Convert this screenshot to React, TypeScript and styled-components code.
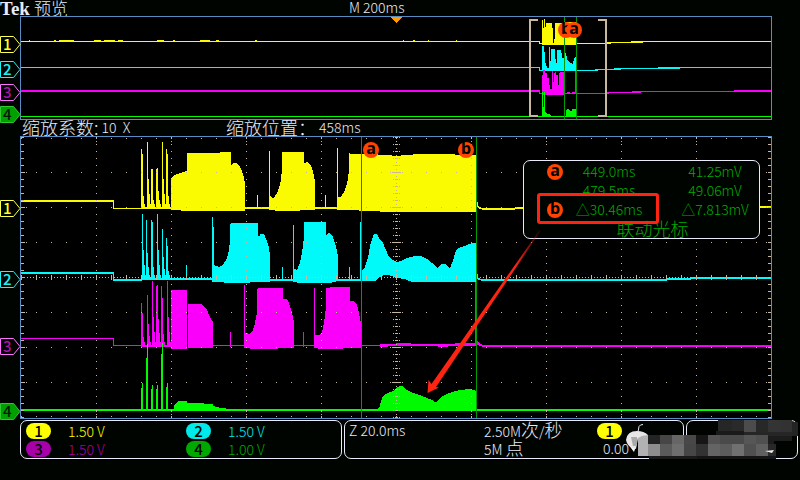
import React from "react";
import styled, { createGlobalStyle } from "styled-components";

const YELLOW = "#fafa00";
const CYAN = "#00fafa";
const MAGENTA = "#fa00fa";
const GREEN = "#00fa00";
const CURSOR = "#009c00";
const FRAME = "#5a8cc4";
const DOT = "#c8b8a0";
const INK = "#eaeafa";
const RED = "#ff2412";
const BADGE = "#ff4400";

const GlobalStyle = createGlobalStyle`
  * { box-sizing: border-box; }
  body {
    margin: 0;
    background: #000400;
    color: ${INK};
    font-family: "Noto Sans CJK SC", "Noto Sans", sans-serif;
    font-weight: 300;
    font-size: 14px;
    line-height: 16px;
  }
`;

const Screen = styled.main`
  min-height: 100vh;
  background: #000400;
`;

const Header = styled.header`
  display: grid;
  grid-template-columns: 349fr 451fr;
  height: 16px;
  line-height: 15px;
  white-space: nowrap;
`;

const Brand = styled.div`
  display: flex;
  gap: 4px;
`;

const Logo = styled.strong`
  font: bold 19px/17px "Liberation Serif", serif;
`;

const Han = styled.span`
  font-size: 18px;
  line-height: 14px;
`;

const Title = styled.span`
  font-size: 17px;
`;

const PlotRow = styled.section`
  display: grid;
  grid-template-columns: 20px 1fr 28px;
`;

const Gutter = styled.div<{ $rows: string }>`
  display: grid;
  grid-template-rows: ${(p) => p.$rows};
  align-items: end;
  height: 0;
`;

const Marker = styled.div<{ $color: string }>`
  position: relative;
  z-index: 1;
  width: 21px;
  height: 17px;
  padding-left: 3px;
  color: ${(p) => p.$color};
  font: 500 15px/15px "Noto Sans CJK SC", sans-serif;

  svg {
    position: absolute;
    inset: 0;
    z-index: -1;
  }
`;

const Panel = styled.div`
  position: relative;
  border: 1px solid ${FRAME};
  background: #000;
`;

const Plot = styled.svg<{ $height: number }>`
  display: block;
  width: 100%;
  height: ${(p) => p.$height}px;
  shape-rendering: crispEdges;
`;

const Overlay = styled.svg`
  position: absolute;
  inset: 0;
  width: 100%;
  height: 100%;
  overflow: visible;
  pointer-events: none;
`;

const Badge = styled.span`
  display: block;
  width: 16px;
  height: 16px;
  border-radius: 50%;
  background: ${BADGE};
  color: #000;
  text-align: center;
  font: bold 16px/13px "Noto Sans", sans-serif;
`;

const PlacedBadge = styled(Badge)<{ $x: number; $top: number }>`
  position: absolute;
  left: ${(p) => ((p.$x - 21) / 750) * 100}%;
  top: ${(p) => p.$top}px;
  transform: translateX(-50%);
`;

const ZoomBar = styled.div`
  display: grid;
  grid-template-columns: 204fr 574fr;
  height: 16px;
  padding-left: 22px;
  line-height: 15px;
  white-space: nowrap;
`;

const Field = styled.div<{ $gap: number }>`
  display: flex;
  gap: ${(p) => p.$gap}px;
`;

const CursorBox = styled.div`
  position: absolute;
  top: 23px;
  right: 11px;
  width: 237px;
  height: 79px;
  padding-top: 1px;
  border: 1px solid ${INK};
  border-radius: 7px;
  background: #000400;
  color: #00ac00;
`;

const CursorTable = styled.table`
  width: 100%;
  table-layout: fixed;
  border-collapse: collapse;
  text-align: center;

  caption {
    caption-side: bottom;
    padding-left: 22px;
    font-size: 18px;
    line-height: 18px;
  }
  th, td {
    height: 19px;
    padding: 0;
    font-weight: 300;
    line-height: 19px;
    white-space: nowrap;
  }
  th { width: 46px; padding-left: 23px; }
  td { width: 78px; }
  td:last-child { width: auto; padding-left: 23px; }
`;

const Highlight = styled.div`
  position: absolute;
  top: 32px;
  left: 13px;
  width: 122px;
  height: 31px;
  border: 3px solid ${RED};
  border-radius: 3px;
`;

const Footer = styled.footer`
  position: relative;
  display: grid;
  grid-template-columns: 322fr 340fr 112fr;
  gap: 2px;
  margin-top: 1px;
  padding: 0 2px 0 20px;
  white-space: nowrap;
`;

const Box = styled.section`
  height: 39px;
  border: 1px solid ${INK};
  border-radius: 7px;
`;

const Channels = styled(Box)`
  display: grid;
  grid-template-columns: 161fr 156fr;
  grid-auto-rows: 18px;
  padding: 1px 0 0 5px;
`;

const Timing = styled(Box)`
  display: grid;
  grid-template-columns: 135fr 113fr 86fr;
  padding: 0 0 0 4px;
`;

const Channel = styled.div<{ $color: string }>`
  display: flex;
  align-items: center;
  gap: 17px;
  color: ${(p) => p.$color};
  line-height: 14px;
`;

const Pill = styled.span<{ $color: string }>`
  width: 25px;
  height: 16px;
  border-radius: 8px;
  background: ${(p) => p.$color};
  color: #000;
  text-align: center;
  font-size: 15px;
  font-weight: 500;
  line-height: 15px;
`;

const Stack = styled.div`
  display: grid;
  grid-template-rows: 18px 18px;
  align-items: center;
`;

const TriggerLine = styled.div`
  display: flex;
  align-items: center;
  gap: 13px;
  padding-top: 1px;
`;

const Level = styled.span`
  padding-left: 6px;
`;

const Smudge = styled.svg`
  position: absolute;
  top: -1px;
  right: 0;
  width: 174px;
  height: 41px;
`;

const markerColors = ["#ffff20", "#20f0f0", "#b010b0", "#00a000"];
const markerEdges = ["#ffff50", "#20f0f0", "#ff70ff", "#30c830"];

function Markers({ rows }: { rows: string }) {
  return (
    <Gutter $rows={rows}>
      {markerColors.map((color, i) => (
        <Marker key={color} $color={i === 3 ? "#001800" : color}>
          <svg width="21" height="17" viewBox="0 0 21 17" aria-hidden="true">
            <path
              d="M.5 .5H13.5L20 8.5L13.5 16.5H.5Z"
              fill={i === 3 ? "#00a000" : "#000400"}
              stroke={markerEdges[i]}
            />
          </svg>
          {i + 1}
        </Marker>
      ))}
    </Gutter>
  );
}

type Spike = [x: number, top: number, width?: number];

function Spikes({ list, base, color }: { list: Spike[]; base: number; color: string }) {
  return (
    <g fill={color}>
      {list.map(([x, top, width = 1]) => (
        <rect key={x} x={x} y={top} width={width} height={base - top} />
      ))}
    </g>
  );
}

function Bursts({ list, base, color }: { list: Spike[]; base: number; color: string }) {
  return (
    <g fill={color}>
      {list.map(([x, top]) => {
        const h = base - top;
        return (
          <path
            key={x}
            d={`M${x} ${base}V${top}h1V${base - h * 0.45}h1V${base - h * 0.22}h1V${base - 5}h1V${base - 2}h2V${base}Z`}
          />
        );
      })}
    </g>
  );
}

const columns = [96, 171, 246, 321, 471, 546, 621, 696];
const lines = [172, 207, 242, 312, 347, 382];

function Graticule() {
  return (
    <g stroke={DOT} fill="none">
      {columns.map((x) => (
        <path key={x} d={`M${x + 0.5} 137V418`} strokeDasharray="1 6" />
      ))}
      {columns.map((x) => (
        <path key={x} d={`M${x + 0.5} 138V146M${x + 0.5} 411V418`} strokeDasharray="1 2" />
      ))}
      {lines.map((y) => (
        <path key={y} d={`M21 ${y + 0.5}H771`} strokeDasharray="1 14" />
      ))}
      {lines.map((y) => (
        <path
          key={y}
          d={`M22 ${y + 0.5}H27M766 ${y + 0.5}H771M390 ${y + 0.5}H403`}
          strokeDasharray="1 1"
        />
      ))}
      <path d="M21 138.5H771M21 416.5H771" strokeDasharray="1 14" />
      <path d="M22.5 137V418M769.5 137V418M396.5 137V418" strokeWidth="3" strokeDasharray="1 6" />
      <path d="M393.5 137V418M399.5 137V418" strokeDasharray="1 6" />
      <path d="M396.5 137V418" strokeDasharray="1 2.5" />
      <path d="M21 277.5H771" strokeDasharray="1 2" />
      <path d="M21 277.5H771" strokeWidth="5" strokeDasharray="1 14" />
    </g>
  );
}

function MainPlot() {
  return (
    <Plot $height={281} viewBox="21 137 750 281" preserveAspectRatio="none" role="img" aria-label="Zoomed traces">
      {/* channel 1 */}
      <g fill={YELLOW}>
        <path d="M21 200H114V208H142V209H113V202H21Z" />
        <path d="M142 207H172V209H142ZM245 207H270V209H245ZM315 207H338V209H315Z" />
        <path d="M171 210V180L172 177L175 175L180 173L187 171V153H220V152H231V165L233 163H236L239 165L241 169L243 174L245 183V211H190Z" />
        <path d="M269 210V151H270V196L272 198H274L277 193L279 188L281 180L282 168V152H304V163L308 162L311 166L313 171L315 181V210H300V211H280Z" />
        <path d="M337 210V148H338V197H341L344 192L347 184L349 171V152L350 154L375 154L380 155H390L393 156L408 155L418 154H450L460 155H476V212H380V211Z" />
        <path d="M477 202H478V206L482 208H515V207H524V209H515V210H483L478 208L477 207ZM759 206H771V208H759Z" />
      </g>
      <Bursts color={YELLOW} base={209} list={[[141, 149], [147, 142], [151, 169], [157, 168], [162, 142], [166, 149]]} />
      <Spikes color={YELLOW} base={208} list={[[142, 154], [152, 169], [156, 169], [167, 154], [257, 195], [325, 195]]} />

      {/* channel 2 */}
      <g fill={CYAN}>
        <path d="M21 272H114V279H142V281H113V274H21Z" />
        <path d="M142 278H213V280H142ZM270 279H294V281H270ZM338 279H361V281H338Z" />
        <path d="M212 282V217H213V227H214V265L219 267L223 265L227 258L229 250L230 241V224L231 223H258V236H260V234H264L267 241L269 248L270 255V282H250V283H235Z" />
        <path d="M293 282V225H294V269L297 270L300 263L302 253L304 237V222H326V235L329 233L333 237L336 246L338 256V281L330 283H300Z" />
        <path d="M360 281V222H361V271L365 267L368 258L370 246L372 239L374 234H377L379 238L383 243L386 250L389 257L393 260L397 262L403 260L410 257L415 256H421L427 259L432 263L437 268L441 264H445L450 268L453 261L455 253L458 248L465 246L472 243H476V282H412L405 279L397 278L388 275H384L380 277L375 281Z" />
        <path d="M477 274H478V278L482 279H667V278H690V277H771V279H691V280H667V281H482L477 279Z" />
      </g>
      <Bursts color={CYAN} base={280} list={[[142, 214], [146, 220], [151, 220], [157, 214], [162, 229], [166, 238]]} />
      <Spikes color={CYAN} base={280} list={[[152, 222], [167, 246], [186, 265], [282, 267], [349, 267]]} />

      {/* channel 3 */}
      <g fill={MAGENTA}>
        <path d="M21 338H114V345H142V346H113V339H21Z" />
        <path d="M142 345H171V346H142ZM213 345H245V346H213ZM294 345H315V346H294ZM361 345H380V346H361Z" />
        <path d="M171 349V290H187V349ZM188 348V304H201L204 306L207 310L210 317L213 322V348Z" />
        <path d="M244 348V285H245V333L250 334L253 330L255 323L257 313V290L258 288H283V299H287L289 303L292 312L294 323V348H280L275 349H255Z" />
        <path d="M314 348V288H315V335H319L322 332L324 323L326 307V288L334 287H350V301H354L357 305L359 313L361 323V348H345L340 349H322Z" />
        <path d="M380 344H396V343H411V344H455V343H475V282H476V346H448V347H438V346H395L380 347ZM477 340L480 344L483 345H771V347H483L477 345Z" />
      </g>
      <Bursts color={MAGENTA} base={347} list={[[141, 303], [147, 295], [152, 281], [157, 285], [161, 286], [167, 281]]} />
      <Spikes color={MAGENTA} base={347} list={[[142, 313], [156, 286], [162, 298], [230, 332], [303, 332]]} />

      {/* channel 4 */}
      <g fill={GREEN}>
        <path d="M21 409H771V411H21Z" />
        <path d="M174 410V406L176 403L179 401H187V403H200L208 404H213V406L221 408L230 409V411Z" />
        <path d="M378 411V408L380 406L381 401L383 396L388 393L393 391L398 387L399 386H402L405 389L413 393L422 396L427 398L432 400L435 402H437L440 398L445 395L452 392L460 390L470 389L476 391V411Z" />
      </g>
      <Spikes
        color={GREEN}
        base={410}
        list={[[141, 388], [142, 383], [146, 358], [147, 344], [151, 389], [152, 385], [156, 389], [157, 385], [161, 354], [162, 343], [166, 387], [167, 383]]}
      />
      <Graticule />
      <path d="M361.5 137V418M476.5 137V418" stroke={CURSOR} />
    </Plot>
  );
}

function OverviewPlot() {
  return (
    <Plot $height={102} viewBox="21 17 750 102" preserveAspectRatio="none" role="img" aria-label="Full record traces">
      <g fill={YELLOW}>
        <path d="M21 41H540V43H605V42H631V41H771V42H643V43H611V44H539V42H21Z" />
        <path d="M542 45V20H543V28H544V19H545V31L546 23H552V28H553V43H554V39H555V23H562V27H563V22H576V45Z" />
        <path d="M29 40h1v1h-1zM54 40h2v1h-2zM59 40h15v1h-15zM94 40h7v1h-7zM104 40h11v1h-11zM118 40h5v1h-5zM157 40h7v1h-7zM173 40h2v1h-2zM200 40h10v1h-10zM216 40h3v1h-3zM255 40h2v1h-2zM403 40h1v1h-1zM413 40h2v1h-2zM428 40h1v1h-1zM456 40h1v1h-1z" />
      </g>
      <g fill={CYAN}>
        <path d="M21 67H540V70H595V69H614V68H658V67H771V68H680V69H621V70H598V71H539V68H21Z" />
        <path d="M542 71V46H544V52H545V61L547 68H549V47H550V61H551V49H555V57L557 65V50H561V53H562V58H564V53H566L567 59L569 62L573 64L574 59L576 56V71Z" />
      </g>
      <g fill={MAGENTA}>
        <path d="M21 90H540V93H607V92H632V91H734V90H771V92H641V93H609V94H539V92H21Z" />
        <path d="M542 95V75H543V70H545V73H547V78H549V81L550 89H552V71H553V82H554V73L556 72V75H558V85H559V73L560 72H564V95ZM575 71H576V93H575ZM567 92h3v1h-3zM572 92h3v1h-3z" />
      </g>
      <g fill={GREEN}>
        <path d="M21 116H771V117H21Z" />
        <path d="M542 116V92H543V107H544V92H545V112L547 114H549L551 116ZM566 116V110L568 108L570 111H572V109H576V116Z" />
      </g>
      <path d="M564.5 17V119M576.5 17V119" stroke={CURSOR} />
      <path d="M538 20H530V116H538M598 20H606V116H598" fill="none" stroke={DOT} strokeWidth="2" />
      <path d="M391 17H402L397 23H396Z" fill="#ff9a00" />
    </Plot>
  );
}

const readings = [
  { badge: "a", time: "449.0ms", volts: "41.25mV" },
  { badge: "", time: "479.5ms", volts: "49.06mV" },
  { badge: "b", time: "△30.46ms", volts: "△7.813mV" },
];

function CursorReadout() {
  return (
    <CursorBox>
      <CursorTable>
        <caption>联动光标</caption>
        <tbody>
          {readings.map((r) => (
            <tr key={r.time}>
              <th scope="row">{r.badge && <Badge>{r.badge}</Badge>}</th>
              <td>{r.time}</td>
              <td>{r.volts}</td>
            </tr>
          ))}
        </tbody>
      </CursorTable>
      <Highlight />
    </CursorBox>
  );
}

function Arrow() {
  return (
    <Overlay viewBox="21 137 750 281" preserveAspectRatio="none" aria-hidden="true">
      <defs>
        <linearGradient id="arrow" gradientUnits="userSpaceOnUse" x1="540" y1="230" x2="515" y2="266">
          <stop offset="0" stopColor={RED} stopOpacity=".1" />
          <stop offset="1" stopColor={RED} />
        </linearGradient>
      </defs>
      <path d="M427.5 393L428.5 380L431.5 384L539.5 230L540.5 231L436 387L439 387.5Z" fill="url(#arrow)" />
    </Overlay>
  );
}

const channels = [
  { color: "#ffff00", scale: "1.50 V" },
  { color: "#00eaea", scale: "1.50 V" },
  { color: "#a800a8", scale: "1.50 V" },
  { color: "#00a800", scale: "1.00 V" },
];

/* Mosaic cells as x, y, width, height, grey level. */
const cells: [number, number, number, number, number][] = [
  [92, 1, 14, 11, 38], [106, 1, 12, 11, 42], [118, 1, 12, 12, 76], [130, 1, 12, 12, 40], [142, 1, 12, 12, 52], [154, 1, 12, 12, 50], [166, 3, 6, 14, 36],
  [90, 12, 28, 4, 26], [118, 13, 48, 4, 38], [142, 17, 24, 5, 28],
  [22, 16, 12, 9, 36], [34, 16, 12, 9, 70], [46, 16, 12, 9, 102], [58, 16, 12, 9, 72], [70, 16, 12, 9, 22], [82, 16, 12, 9, 82], [94, 16, 24, 9, 74], [118, 16, 12, 9, 86], [130, 16, 12, 9, 80], [142, 18, 6, 7, 28],
  [12, 16, 10, 21, 178], [22, 25, 12, 12, 142], [34, 25, 12, 12, 90], [46, 25, 12, 12, 110], [58, 25, 12, 12, 70], [70, 25, 12, 12, 50], [82, 25, 12, 12, 100], [94, 25, 12, 12, 92], [106, 25, 12, 12, 112], [118, 25, 12, 12, 80], [130, 25, 12, 12, 96], [142, 25, 8, 12, 40],
  [23, 37, 48, 3, 26], [71, 37, 79, 3, 20],
];

function Mosaic() {
  return (
    <Smudge viewBox="0 0 174 41" aria-hidden="true">
      <path d="M2 25L8 33L10 27Z" fill="#fff" />
      {cells.map(([x, y, w, h, g]) => (
        <rect key={`${x}-${y}`} x={x} y={y} width={w} height={h} fill={`rgb(${g},${g},${g})`} />
      ))}
      <path d="M0 21Q1 12 11 12Q18 12 22 16L16 17L12 19L10 30Q1 28 0 21Z" fill="#e6e6e6" />
      <path d="M5 18h6v9h-4z" fill="#aaa" />
      <path d="M139 32L148 31L146 34Z" fill="#eee" />
    </Smudge>
  );
}

export default function App() {
  return (
    <>
      <GlobalStyle />
      <Screen>
        <Header>
          <Brand>
            <Logo>Tek</Logo>
            <Title>预览</Title>
          </Brand>
          <span>M 200ms</span>
        </Header>

        <PlotRow>
          <Markers rows="37px 25px 23px 22px" />
          <Panel>
            <OverviewPlot />
            <PlacedBadge $x={566} $top={5}>b</PlacedBadge>
            <PlacedBadge $x={574} $top={5}>a</PlacedBadge>
          </Panel>
        </PlotRow>

        <ZoomBar>
          <Field $gap={3}>
            <Han>缩放系数:</Han>
            <span>10&nbsp; X</span>
          </Field>
          <Field $gap={3}>
            <Han>缩放位置：</Han>
            <span>458ms</span>
          </Field>
        </ZoomBar>

        <PlotRow>
          <Markers rows="81px 71px 67px 65px" />
          <Panel>
            <MainPlot />
            <PlacedBadge $x={371} $top={5}>a</PlacedBadge>
            <PlacedBadge $x={466} $top={5}>b</PlacedBadge>
            <CursorReadout />
            <Arrow />
          </Panel>
        </PlotRow>

        <Footer>
          <Channels>
            {channels.map((c, i) => (
              <Channel key={c.color} $color={c.color}>
                <Pill $color={c.color}>{i + 1}</Pill>
                {c.scale}
              </Channel>
            ))}
          </Channels>
          <Timing>
            <Stack>
              <span>Z 20.0ms</span>
            </Stack>
            <Stack>
              <span>2.50M<Han>次</Han>/<Han>秒</Han></span>
              <span>5M <Han>点</Han></span>
            </Stack>
            <Stack>
              <TriggerLine>
                <Pill $color="#ffff00">1</Pill>
                <svg width="8" height="14" viewBox="0 0 8 14" aria-hidden="true">
                  <path d="M0 13.5H2L4 2.5Q5 .5 8 .5" fill="none" stroke={INK} />
                </svg>
              </TriggerLine>
              <Level>0.00</Level>
            </Stack>
          </Timing>
          <Box />
          <Mosaic />
        </Footer>
      </Screen>
    </>
  );
}
